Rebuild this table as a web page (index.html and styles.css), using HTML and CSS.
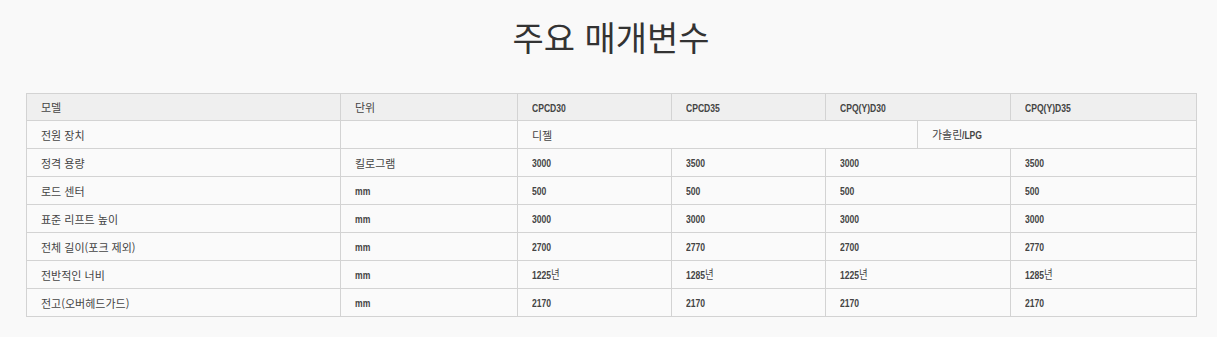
FILE: index.html
```html
<!DOCTYPE html>
<html lang="ko">
<head>
<meta charset="utf-8">
<link rel="stylesheet" href="styles.css">
</head>
<body>
<div class="wrap">
  <h1 class="title">주요 매개변수</h1>
  <table class="spec">
    <colgroup>
      <col class="c1"><col class="c2"><col class="c3"><col class="c4"><col class="c5"><col class="c6"><col class="c7">
    </colgroup>
    <thead>
      <tr><th>모델</th><th>단위</th><th><span class="num">CPCD30</span></th><th><span class="num">CPCD35</span></th><th colspan="2"><span class="num">CPQ(Y)D30</span></th><th><span class="num">CPQ(Y)D35</span></th></tr>
    </thead>
    <tbody>
      <tr><td>전원 장치</td><td></td><td colspan="3">디젤</td><td colspan="2">가솔린<span class="num">/LPG</span></td></tr>
      <tr><td>정격 용량</td><td>킬로그램</td><td><span class="num">3000</span></td><td><span class="num">3500</span></td><td colspan="2"><span class="num">3000</span></td><td><span class="num">3500</span></td></tr>
      <tr><td>로드 센터</td><td><span class="num">mm</span></td><td><span class="num">500</span></td><td><span class="num">500</span></td><td colspan="2"><span class="num">500</span></td><td><span class="num">500</span></td></tr>
      <tr><td>표준 리프트 높이</td><td><span class="num">mm</span></td><td><span class="num">3000</span></td><td><span class="num">3000</span></td><td colspan="2"><span class="num">3000</span></td><td><span class="num">3000</span></td></tr>
      <tr><td>전체 길이(포크 제외)</td><td><span class="num">mm</span></td><td><span class="num">2700</span></td><td><span class="num">2770</span></td><td colspan="2"><span class="num">2700</span></td><td><span class="num">2770</span></td></tr>
      <tr><td>전반적인 너비</td><td><span class="num">mm</span></td><td><span class="num">1225<span class="ko">년</span></span></td><td><span class="num">1285<span class="ko">년</span></span></td><td colspan="2"><span class="num">1225<span class="ko">년</span></span></td><td><span class="num">1285<span class="ko">년</span></span></td></tr>
      <tr><td>전고(오버헤드가드)</td><td><span class="num">mm</span></td><td><span class="num">2170</span></td><td><span class="num">2170</span></td><td colspan="2"><span class="num">2170</span></td><td><span class="num">2170</span></td></tr>
    </tbody>
  </table>
</div>
</body>
</html>
```
FILE: styles.css
```css
html, body {
  margin: 0;
  padding: 0;
  background: #f9f9f9;
}
.wrap {
  padding: 0 21px 0 26px;
}
.title {
  margin: 0;
  padding-top: 13px;
  height: 93px;
  box-sizing: border-box;
  text-align: center;
  font-family: "Noto Sans CJK KR", "Noto Sans", sans-serif;
  font-weight: 400;
  font-size: 34px;
  line-height: 48px;
  color: #333;
}
.spec {
  width: 1171px;
  table-layout: fixed;
  border-collapse: collapse;
  font-family: "Noto Sans CJK KR", sans-serif;
  font-size: 11px;
  color: #444;
}
.c1 { width: 314px; }
.c2 { width: 177px; }
.c3 { width: 154px; }
.c4 { width: 154px; }
.c5 { width: 92px; }
.c6 { width: 93px; }
.c7 { width: 186px; }
.spec th, .spec td {
  border: 1px solid #d3d3d3;
  height: 28px;
  padding: 0 14px;
  text-align: left;
  font-weight: 400;
  vertical-align: middle;
  line-height: 16px;
  box-sizing: border-box;
  white-space: nowrap;
}
.spec thead th {
  background: #efefef;
  height: 27px;
}
.spec tbody td {
  background: #fafafa;
}
.spec .num {
  display: inline-block;
  font-family: "Liberation Sans", Arial, sans-serif;
  font-weight: 700;
  font-size: 11px;
  color: #444;
  transform: scaleX(0.78);
  transform-origin: left center;
  vertical-align: baseline;
}
.spec .ko {
  font-family: "Noto Sans CJK KR", sans-serif;
  font-weight: 400;
  font-size: 12px;
}
```
